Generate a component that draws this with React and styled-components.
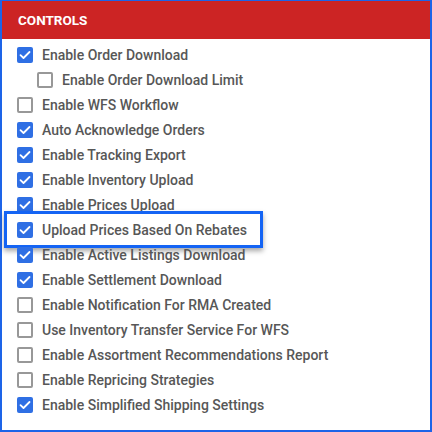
import React from "react";
import styled, { createGlobalStyle } from "styled-components";

const Global = createGlobalStyle`
  html, body { margin: 0; padding: 0; background: #fff; }
  body { font-family: Roboto, "Noto Sans", Arial, sans-serif; }
`;

const Panel = styled.div`
  box-sizing: border-box;
  width: 432px;
  height: 432px;
  border-top: 1px solid #1d64e8;
  border-left: 2px solid #1d64e8;
  border-right: 2px solid #1d64e8;
  border-bottom: 2px solid #1d64e8;
  background: #fff;
  display: flex;
  flex-direction: column;
`;

const Header = styled.div`
  height: 38px;
  background: #cc2424;
  color: #fff;
  font-weight: 700;
  font-size: 13.5px;
  display: flex;
  align-items: center;
  padding-left: 16px;
`;

const List = styled.div`
  display: flex;
  flex-direction: column;
  padding-top: 3px;
`;

const Row = styled.div`
  position: relative;
  height: 25px;
  display: flex;
  align-items: center;
  padding-left: ${(p) => (p.$indent ? 35 : 15)}px;
  gap: 9px;
  font-size: 14px;
  font-weight: 500;
  color: #575757;
  white-space: nowrap;
`;

const Box = styled.span`
  box-sizing: border-box;
  width: 16px;
  height: 16px;
  border-radius: 2px;
  flex: none;
  display: flex;
  align-items: center;
  justify-content: center;
  background: ${(p) => (p.$checked ? "#2f6fe4" : "#fff")};
  border: ${(p) => (p.$checked ? "none" : "2px solid #989898")};
`;

const Highlight = styled.span`
  position: absolute;
  left: 2px;
  top: -6px;
  width: 259px;
  height: 37px;
  box-sizing: border-box;
  border: 3px solid #1464f4;
  box-shadow: 0 3px 5px rgba(0, 0, 0, 0.35);
  pointer-events: none;
`;

const Check = () => (
  <svg width="12" height="10" viewBox="0 0 12 10">
    <path d="M1.5 5.2 L4.5 8 L10.5 2" fill="none" stroke="#fff" strokeWidth="1.8" strokeLinecap="round" strokeLinejoin="round" />
  </svg>
);

const items = [
  ["Enable Order Download", true],
  ["Enable Order Download Limit", false, true],
  ["Enable WFS Workflow", false],
  ["Auto Acknowledge Orders", true],
  ["Enable Tracking Export", true],
  ["Enable Inventory Upload", true],
  ["Enable Prices Upload", true],
  ["Upload Prices Based On Rebates", true, false, true],
  ["Enable Active Listings Download", true],
  ["Enable Settlement Download", true],
  ["Enable Notification For RMA Created", false],
  ["Use Inventory Transfer Service For WFS", false],
  ["Enable Assortment Recommendations Report", false],
  ["Enable Repricing Strategies", false],
  ["Enable Simplified Shipping Settings", true],
];

export default function App() {
  return (
    <>
      <Global />
      <Panel>
        <Header>CONTROLS</Header>
        <List>
          {items.map(([label, checked, indent, hl]) => (
            <Row key={label} $indent={indent}>
              <Box $checked={checked}>{checked && <Check />}</Box>
              <span>{label}</span>
              {hl && <Highlight />}
            </Row>
          ))}
        </List>
      </Panel>
    </>
  );
}
